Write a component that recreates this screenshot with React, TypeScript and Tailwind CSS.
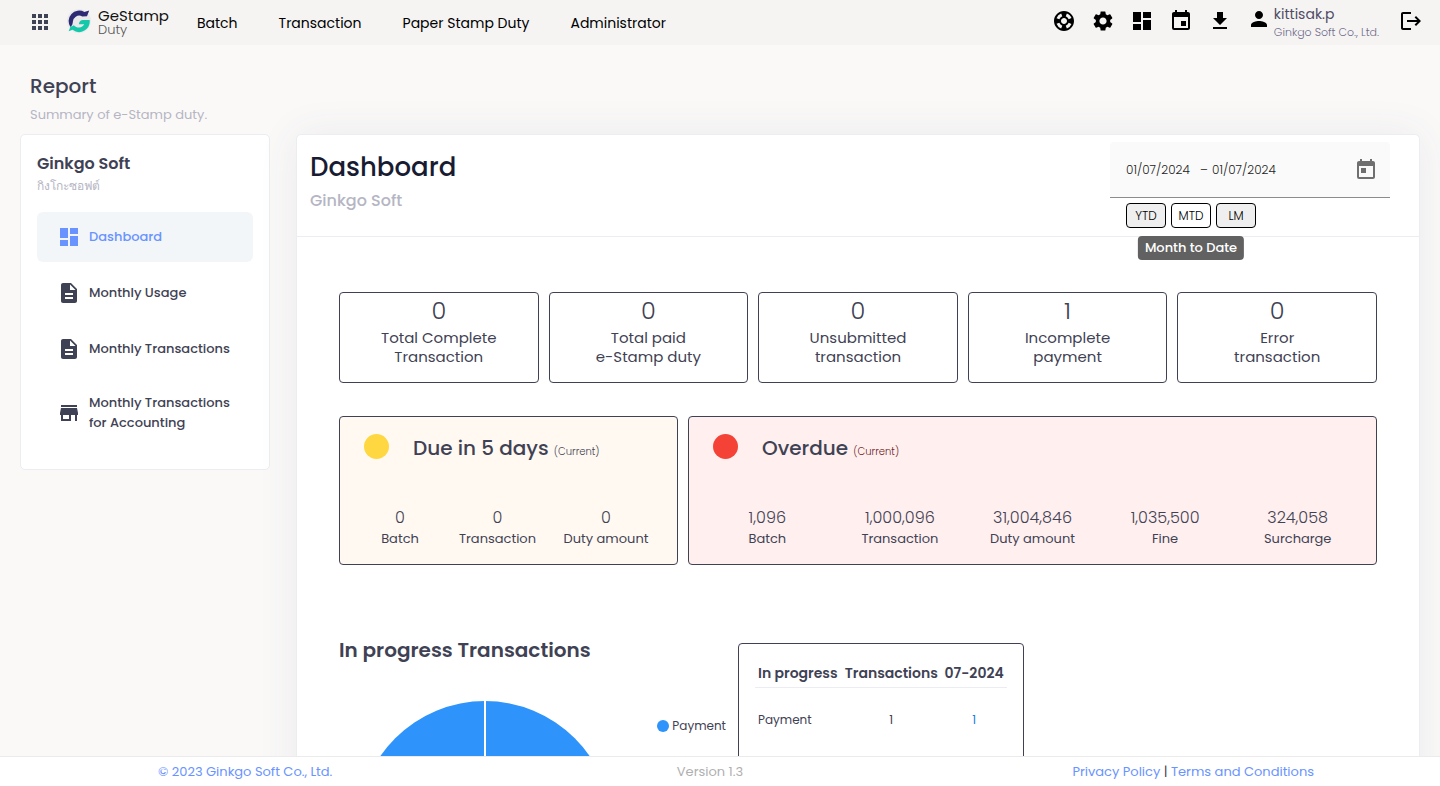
import React from "react";
import {
  MdApps,
  MdDashboard,
  MdDescription,
  MdEvent,
  MdFileDownload,
  MdLogout,
  MdPerson,
  MdSettings,
  MdStore,
  MdSupport,
  MdToday,
} from "react-icons/md";
import type { IconType } from "react-icons";

const navLinks = ["Batch", "Transaction", "Paper Stamp Duty", "Administrator"];

const tools: { label: string; icon: IconType }[] = [
  { label: "Support", icon: MdSupport },
  { label: "Settings", icon: MdSettings },
  { label: "Dashboard", icon: MdDashboard },
  { label: "Calendar", icon: MdEvent },
  { label: "Download", icon: MdFileDownload },
];

const menu: { label: string; icon: IconType; active?: boolean }[] = [
  { label: "Dashboard", icon: MdDashboard, active: true },
  { label: "Monthly Usage", icon: MdDescription },
  { label: "Monthly Transactions", icon: MdDescription },
  { label: "Monthly Transactions for Accounting", icon: MdStore },
];

const stats = [
  { value: "0", lines: ["Total Complete", "Transaction"] },
  { value: "0", lines: ["Total paid", "e-Stamp duty"] },
  { value: "0", lines: ["Unsubmitted", "transaction"] },
  { value: "1", lines: ["Incomplete", "payment"] },
  { value: "0", lines: ["Error", "transaction"] },
];

const due = [
  ["0", "Batch"],
  ["0", "Transaction"],
  ["0", "Duty amount"],
];

const overdue = [
  ["1,096", "Batch"],
  ["1,000,096", "Transaction"],
  ["31,004,846", "Duty amount"],
  ["1,035,500", "Fine"],
  ["324,058", "Surcharge"],
];

function Logo() {
  return (
    <a href="#" className="flex items-center gap-[7px]">
      <svg viewBox="0 0 24 24" className="mb-1 size-6" aria-hidden="true">
        <circle cx="12" cy="12" r="12" fill="#e9e9ea" />
        <path
          d="M3.4 18A10.6 10.6 0 0 1 17.4 2.9L22.2 1.4 20 7.2 15.2 7.4A6.4 6.4 0 0 0 5.8 13.4Q5.9 16 3.4 18Z"
          fill="#2b2a72"
        />
        <path
          d="M1.6 22.2 3.6 17.6Q5.2 17.4 6.8 16.2A6.2 6.2 0 0 0 17.2 15.2H11.8Q12.6 11 16 11H22.6A10.6 10.6 0 0 1 5.6 20.8Z"
          fill="#14c8aa"
        />
      </svg>
      <span className="mb-0.5 flex flex-col">
        <span className="text-[15px] leading-4 text-[#111111]">GeStamp</span>
        <span className="text-[13px] leading-3 font-light text-[#555555]">Duty</span>
      </span>
    </a>
  );
}

function Header() {
  return (
    <header className="flex h-[45px] shrink-0 items-center bg-[#f5f4f3] pr-[17px] pl-7 text-black">
      <button type="button" aria-label="Apps" className="mr-[15px] mb-0.5 text-[#3f4254]">
        <MdApps className="size-6" />
      </button>
      <Logo />
      <nav className="ml-7 flex grow gap-[41px] text-sm">
        {navLinks.map((l) => (
          <a key={l} href="#">
            {l}
          </a>
        ))}
      </nav>
      <div className="flex items-start gap-[15px] self-start">
        {tools.map(({ label, icon: Icon }) => (
          <button key={label} type="button" aria-label={label} className="mt-[9px]">
            <Icon className="size-6" />
          </button>
        ))}
        <a href="#" className="mt-1 flex gap-[3px]">
          <MdPerson className="mt-[3px] size-6" />
          <span className="flex flex-col">
            <span className="text-sm leading-5 text-[#504c66]">kittisak.p</span>
            <span className="text-[11px] leading-4 font-light text-[#6f6b8a]">
              Ginkgo Soft Co., Ltd.
            </span>
          </span>
        </a>
      </div>
      <button type="button" aria-label="Log out" className="mt-[9px] ml-5 self-start">
        <MdLogout className="size-6" />
      </button>
    </header>
  );
}

function Sidebar() {
  return (
    <aside className="w-[250px] shrink-0 rounded-[5px] border border-[#ebedf3] bg-white px-4 pt-[17px] pb-[23px]">
      <h2 className="text-base leading-6 font-semibold text-[#3f4254]">Ginkgo Soft</h2>
      <p className="text-xs leading-5 text-[#b5b5c3]">กิงโกะซอฟต์</p>
      <nav className="mt-4 flex flex-col gap-[6px]">
        {menu.map(({ label, icon: Icon, active }) => (
          <a
            key={label}
            href="#"
            className={
              active
                ? "flex items-center gap-2 rounded-md bg-[#f3f6f9] py-[13px] pr-3 pl-5 text-[13px] leading-5 font-medium text-[#6993ff]"
                : "flex items-center gap-2 rounded-md py-[13px] pr-3 pl-5 text-[13px] leading-5 font-medium text-[#3f4254]"
            }
          >
            <Icon className="size-6 shrink-0" />
            {label}
          </a>
        ))}
      </nav>
    </aside>
  );
}

function DateRange() {
  const box = "block h-[25px] w-10 rounded border text-xs font-light text-black";
  return (
    <div className="w-[280px]">
      <div className="flex h-14 items-center rounded-t border-b border-[#8c8c8c] bg-[#fafafa] pr-3 pl-4 text-xs font-light text-[#222222]">
        <input
          aria-label="Start date"
          defaultValue="01/07/2024"
          className="w-[74px] bg-transparent outline-none"
        />
        <span className="w-3">–</span>
        <input
          aria-label="End date"
          defaultValue="01/07/2024"
          className="w-20 grow bg-transparent outline-none"
        />
        <button type="button" aria-label="Open calendar" className="text-[#6f6f6f]">
          <MdToday className="size-6" />
        </button>
      </div>
      <div className="mt-[5px] flex gap-[5px] pl-4">
        <button type="button" className={`${box} bg-[#efefef]`}>
          YTD
        </button>
        <div className="relative">
          <button type="button" aria-describedby="mtd-tip" className={`${box} bg-white`}>
            MTD
          </button>
          <span
            id="mtd-tip"
            role="tooltip"
            className="absolute top-[33px] left-1/2 z-10 -translate-x-1/2 rounded bg-[#616161] px-[7px] text-[13px] leading-6 font-medium whitespace-nowrap text-white"
          >
            Month to Date
          </span>
        </div>
        <button type="button" className={`${box} bg-[#efefef]`}>
          LM
        </button>
      </div>
    </div>
  );
}

function Figures({ items, className }: { items: string[][]; className: string }) {
  return (
    <div className={className}>
      {items.map(([value, label]) => (
        <div key={label}>
          <div className="text-base leading-[22px] font-light">{value}</div>
          <div className="text-[13px] leading-5">{label}</div>
        </div>
      ))}
    </div>
  );
}

function Dashboard() {
  return (
    <section className="min-w-0 grow rounded-[5px] border border-[#ebedf3] bg-white shadow-[0_0_40px_rgba(82,63,105,0.08)]">
      <div className="flex h-[102px] justify-between border-b border-[#ebedf3] pr-[29px] pl-[13px]">
        <div className="pt-[14px]">
          <h1 className="text-[26px] leading-9 font-medium text-[#181c32]">Dashboard</h1>
          <p className="mt-1 text-base leading-6 font-medium text-[#b5b5c3]">Ginkgo Soft</p>
        </div>
        <div className="pt-[7px]">
          <DateRange />
        </div>
      </div>

      <div className="px-[42px] pt-[55px] pb-10 text-[#3f4254]">
        <div className="grid grid-cols-5 gap-[10px]">
          {stats.map(({ value, lines }) => (
            <div
              key={lines.join()}
              className="flex h-[91px] flex-col items-center rounded border border-[#3f4254] pt-px text-center"
            >
              <div className="mb-px text-2xl leading-[33px] font-light">{value}</div>
              <div className="text-[15px] leading-[19px]">
                {lines[0]}
                <br />
                {lines[1]}
              </div>
            </div>
          ))}
        </div>

        <div className="mt-[33px] grid grid-cols-[339fr_689fr] gap-[10px]">
          <div className="h-[149px] rounded border border-[#3f4254] bg-[#fff9f1]">
            <div className="flex items-start gap-6 pt-[15px] pl-6">
              <span className="mt-0.5 size-[25px] rounded-full bg-[#ffd740]" />
              <h2 className="text-xl leading-8 font-medium">
                Due in 5 days <span className="text-[10px] font-light">(Current)</span>
              </h2>
            </div>
            <Figures
              items={due}
              className="mt-[39px] grid grid-cols-[92fr_103fr_114fr] px-[14px] text-center"
            />
          </div>
          <div className="h-[149px] rounded border border-[#3f4254] bg-[#ffefee]">
            <div className="flex items-start gap-6 pt-[15px] pl-6">
              <span className="mt-0.5 size-[25px] rounded-full bg-[#f44336]" />
              <h2 className="text-xl leading-8 font-medium">
                Overdue <span className="text-[10px] font-light text-[#6b1b25]">(Current)</span>
              </h2>
            </div>
            <Figures items={overdue} className="mt-[39px] grid grid-cols-5 px-3 text-center" />
          </div>
        </div>

        <div className="mt-[70px] flex items-start">
          <div className="w-[399px] shrink-0">
            <h2 className="text-xl leading-[30px] font-semibold">In progress Transactions</h2>
            <div className="mt-[35px] flex items-start justify-between">
              <svg viewBox="0 0 256 256" className="ml-[18px] size-64" role="img" aria-label="Payment 100%">
                <circle cx="128" cy="128" r="127" fill="#2e93fa" />
                <path d="M128 0V128" stroke="#ffffff" strokeWidth="2" />
              </svg>
              <div className="mt-4 mr-3 flex h-5 items-center gap-[3px] text-xs">
                <span className="size-3 rounded-full bg-[#2e93fa]" />
                Payment
              </div>
            </div>
          </div>
          <div className="mt-2 h-[340px] w-[286px] rounded border border-[#3f4254] px-4 pt-[15px]">
            <table className="w-full">
              <thead>
                <tr className="border-b border-[#ebedf3] text-sm whitespace-nowrap">
                  <th className="px-[3px] py-1 text-left font-semibold">In progress</th>
                  <th className="px-[3px] py-1 font-semibold">Transactions</th>
                  <th className="px-[3px] py-1 font-semibold">07-2024</th>
                </tr>
              </thead>
              <tbody>
                <tr className="h-16 text-center text-xs">
                  <td className="px-[3px] text-left">Payment</td>
                  <td>1</td>
                  <td>
                    <a href="#" className="text-[#187de4]">
                      1
                    </a>
                  </td>
                </tr>
              </tbody>
            </table>
          </div>
        </div>
      </div>
    </section>
  );
}

export default function App() {
  return (
    <div className="flex h-screen flex-col bg-[#faf9f8] font-[Poppins,Inter,'Noto_Sans',sans-serif]">
      <Header />
      <main className="min-h-0 grow overflow-y-auto px-5 [scrollbar-width:none]">
        <div className="px-[10px] pt-[26px] pb-[9px]">
          <h1 className="text-xl leading-[30px] font-medium text-[#3f4254]">Report</h1>
          <p className="mt-[4px] text-[13px] leading-5 text-[#b5b5c3]">Summary of e-Stamp duty.</p>
        </div>
        <div className="flex items-start gap-[26px]">
          <Sidebar />
          <Dashboard />
        </div>
      </main>
      <footer className="grid h-[30px] shrink-0 grid-cols-3 items-center border-t border-[#ebebeb] bg-white text-[13px] text-[#b5b5c3]">
        <a href="#" className="pl-[158px] whitespace-nowrap text-[#6993ff]">
          © 2023 Ginkgo Soft Co., Ltd.
        </a>
        <span className="pr-5 text-center text-[#b0b0b0]">Version 1.3</span>
        <span className="pr-[126px] text-right whitespace-nowrap text-[#3f4254]">
          <a href="#" className="text-[#6993ff]">
            Privacy Policy
          </a>{" "}
          |{" "}
          <a href="#" className="text-[#6993ff]">
            Terms and Conditions
          </a>
        </span>
      </footer>
    </div>
  );
}
